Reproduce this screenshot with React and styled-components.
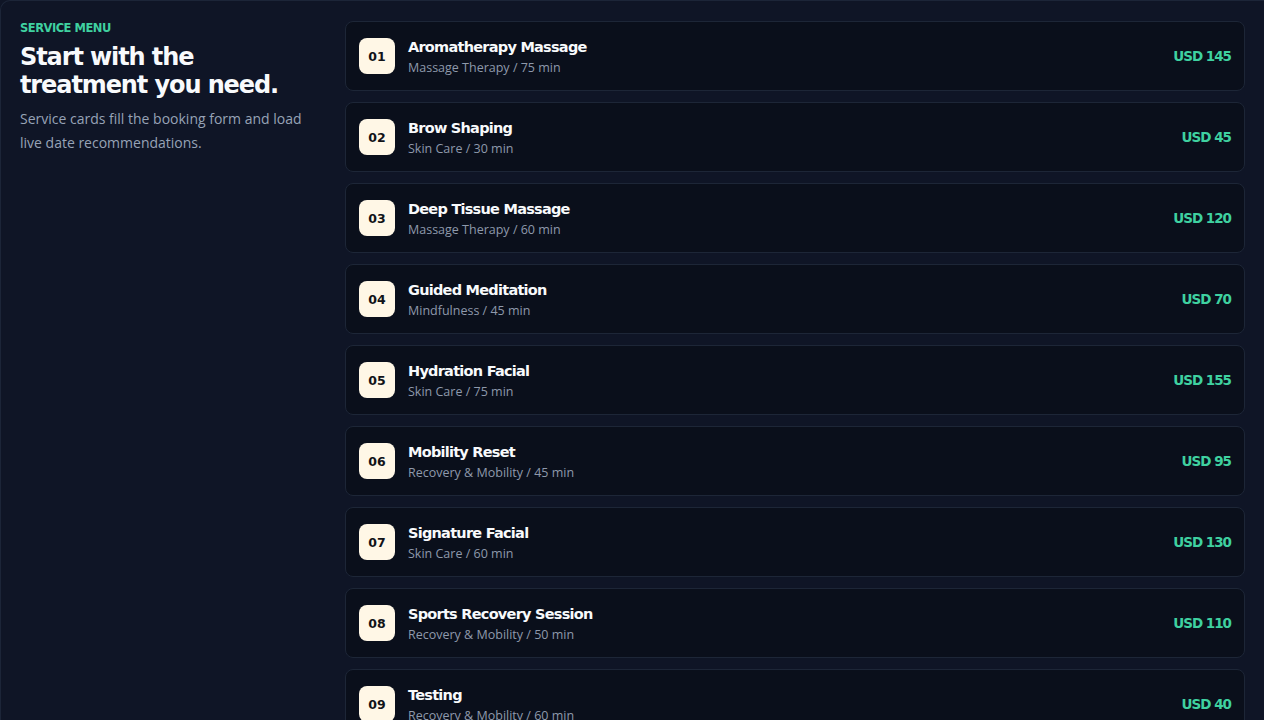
import React from "react";
import styled, { createGlobalStyle } from "styled-components";

const GlobalStyle = createGlobalStyle`
  html, body {
    margin: 0;
    padding: 0;
    background: #0f1526;
    overflow: hidden;
  }
  * { box-sizing: border-box; }
`;

const Panel = styled.section`
  width: 1290px;
  min-height: 720px;
  display: grid;
  grid-template-columns: 305px 900px;
  gap: 20px;
  padding: 20px 20px 20px 19px;
  background: #0f1526;
  border-top: 1px solid #1c2538;
  border-left: 1px solid #1c2538;
  border-top-left-radius: 10px;
`;

const Intro = styled.div`
  display: flex;
  flex-direction: column;
  margin-top: -1px;
  font-family: "Open Sans", "Noto Sans", sans-serif;
`;

const Eyebrow = styled.div`
  font-family: "DejaVu Sans", "Noto Sans", sans-serif;
  font-size: 11.5px;
  font-weight: 700;
  color: #3fd1a0;
  text-transform: uppercase;
  line-height: 16px;
  letter-spacing: -0.5px;
`;

const Heading = styled.h1`
  margin: 7px 0 0;
  font-family: "DejaVu Sans", "Noto Sans", sans-serif;
  font-size: 24px;
  font-weight: 800;
  line-height: 28px;
  color: #f8fafc;
  letter-spacing: -1.1px;
`;

const Lead = styled.p`
  margin: 8px 0 0;
  font-size: 14px;
  line-height: 24px;
  color: #97a3b6;
`;

const List = styled.div`
  display: flex;
  flex-direction: column;
  gap: 11px;
`;

const Card = styled.div`
  height: 70px;
  display: flex;
  align-items: center;
  gap: 13px;
  padding: 0 13px 0 13px;
  background: #0a0f1b;
  border: 1px solid #1d2637;
  border-radius: 8px;
`;

const Badge = styled.div`
  width: 36px;
  height: 36px;
  flex: none;
  display: flex;
  align-items: center;
  justify-content: center;
  border-radius: 8px;
  background: #fff7e6;
  color: #111318;
  font-family: "DejaVu Sans", sans-serif;
  font-size: 12.5px;
  font-weight: 700;
`;

const Info = styled.div`
  flex: 1;
  display: flex;
  flex-direction: column;
  gap: 2px;
  padding-top: 2px;
`;

const Title = styled.div`
  font-family: "DejaVu Sans", "Noto Sans", sans-serif;
  font-size: 14.5px;
  font-weight: 700;
  color: #f8fafc;
  line-height: 19px;
  letter-spacing: -0.75px;
`;

const Meta = styled.div`
  font-family: "Open Sans", "Noto Sans", sans-serif;
  font-size: 12.5px;
  color: #8e99ab;
  line-height: 18px;
`;

const Price = styled.div`
  font-family: "DejaVu Sans", "Noto Sans", sans-serif;
  font-size: 13.5px;
  font-weight: 700;
  color: #3fd1a0;
  letter-spacing: -1px;
`;

const services = [
  ["Aromatherapy Massage", "Massage Therapy / 75 min", 145],
  ["Brow Shaping", "Skin Care / 30 min", 45],
  ["Deep Tissue Massage", "Massage Therapy / 60 min", 120],
  ["Guided Meditation", "Mindfulness / 45 min", 70],
  ["Hydration Facial", "Skin Care / 75 min", 155],
  ["Mobility Reset", "Recovery & Mobility / 45 min", 95],
  ["Signature Facial", "Skin Care / 60 min", 130],
  ["Sports Recovery Session", "Recovery & Mobility / 50 min", 110],
  ["Testing", "Recovery & Mobility / 60 min", 40],
];

export default function App() {
  return (
    <>
      <GlobalStyle />
      <Panel>
        <Intro>
          <Eyebrow>Service Menu</Eyebrow>
          <Heading>
            Start with the
            <br />
            treatment you need.
          </Heading>
          <Lead>
            Service cards fill the booking form and load live date
            recommendations.
          </Lead>
        </Intro>
        <List>
          {services.map(([name, meta, price], i) => (
            <Card key={name}>
              <Badge>{String(i + 1).padStart(2, "0")}</Badge>
              <Info>
                <Title>{name}</Title>
                <Meta>{meta}</Meta>
              </Info>
              <Price>USD {price}</Price>
            </Card>
          ))}
        </List>
      </Panel>
    </>
  );
}
